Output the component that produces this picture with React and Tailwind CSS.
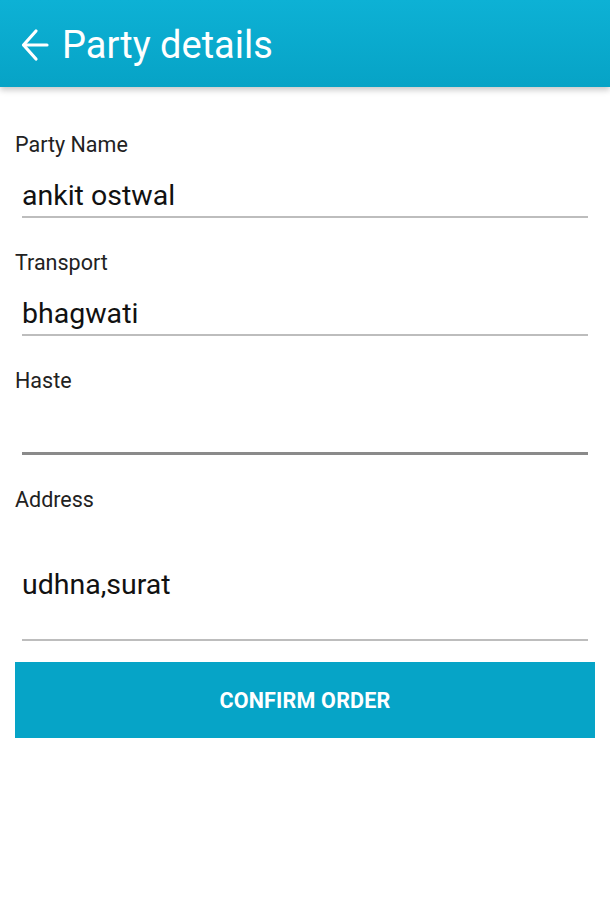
export default function App() {
  const fields = [
    { label: 'Party Name', value: 'ankit ostwal', line: 'h-[2px] bg-[#bdbdbd]', valueCls: 'pt-[22px] pb-[4px]' },
    { label: 'Transport', value: 'bhagwati', line: 'h-[2px] bg-[#bdbdbd]', valueCls: 'pt-[22px] pb-[4px]' },
    { label: 'Haste', value: '', line: 'h-[3px] bg-[#8a8a8a]', valueCls: 'pt-[22px] pb-[4px]' },
    { label: 'Address', value: 'udhna,surat', line: 'h-[2px] bg-[#bdbdbd]', valueCls: 'pt-[56px] pb-[38px]' },
  ]

  return (
    <div className="w-[610px] h-[900px] bg-white font-['Roboto',sans-serif] overflow-hidden">
      {/* Toolbar */}
      <header className="relative z-10 h-[87px] bg-gradient-to-b from-[#0db1d5] to-[#07a3c6] flex items-center pl-[21px] shadow-[0_3px_6px_rgba(0,0,0,0.22)]">
        <svg width="28" height="34" viewBox="0 0 28 34" fill="none" stroke="white" strokeWidth="3.2" strokeLinecap="round" strokeLinejoin="round" className="mt-[2px]">
          <path d="M26 17H3" />
          <path d="M15 3L2.5 17L15 31" />
        </svg>
        <h1 className="ml-[13px] text-white text-[38px] leading-none pt-[3px]">Party details</h1>
      </header>

      {/* Form */}
      <div className="flex flex-col pt-[46px] px-[15px]">
        {fields.map((f, i) => (
          <div key={f.label} className={i === 0 ? '' : 'mt-[33px]'}>
            <div className="text-[21.5px] leading-[24px] text-[#222]">{f.label}</div>
            <div className="pl-[7px] pr-[7px]">
              <div className={`${f.valueCls} text-[28.5px] leading-[33px] text-[#111] min-h-[33px]`}>
                {f.value || '\u00a0'}
              </div>
              <div className={f.line} />
            </div>
          </div>
        ))}

        <button className="mt-[21px] h-[76px] w-[580px] pt-[3px] bg-[#06a4c7] text-white font-bold text-[21.5px] tracking-[0.2px]">
          CONFIRM ORDER
        </button>
      </div>
    </div>
  )
}
